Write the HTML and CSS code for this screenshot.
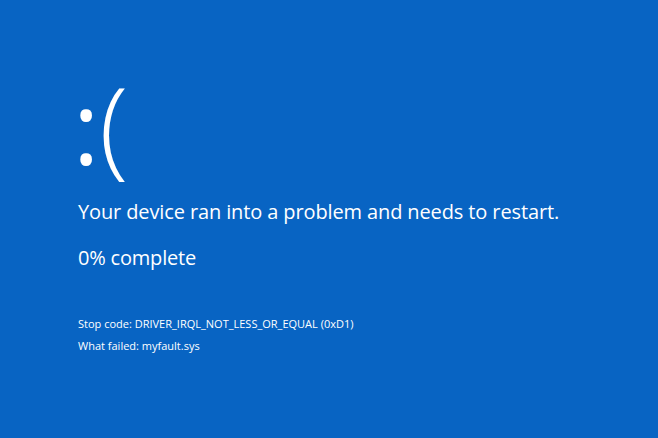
FILE: index.html
```html
<!DOCTYPE html>
<html lang="en">
<head>
    <meta charset="UTF-8">
    <meta name="viewport" content="width=device-width, initial-scale=1.0">
    <title>Stop error</title>
    <link rel="stylesheet" href="styles.css">
</head>
<body>

    <div class="screen">
        <div class="face"><span class="eyes">:</span><span class="mouth">(</span></div>
        <p class="message">Your device ran into a problem and needs to restart.</p>
        <p class="progress">0% complete</p>

        <div class="details">
            <p>Stop code: DRIVER_IRQL_NOT_LESS_OR_EQUAL (0xD1)</p>
            <p>What failed: myfault.sys</p>
        </div>
    </div>

</body>
</html>
```

FILE: styles.css
```css
/* blue screen */
html, body {
    margin: 0;
    height: 100%;
}

body {
    background-color: #0864c3;
    color: #fff;
    font-family: "Open Sans", "Noto Sans", Arial, sans-serif;
}

.screen {
    padding: 70px 0 0 78px;
}

.face {
    line-height: 1;
    margin: 0 0 21px -5px;
}

.eyes {
    font-size: 100px;
    font-weight: 400;
}

.mouth {
    font-size: 107px;
    font-weight: 300;
}

.message {
    font-size: 20px;
    letter-spacing: -0.12px;
    margin: 0 0 19px;
}

.progress {
    font-size: 20px;
    letter-spacing: -0.2px;
    margin: 0;
}

.details {
    margin-top: 45px;
}

.details p {
    font-size: 11px;
    margin: 0 0 7px;
}
```
